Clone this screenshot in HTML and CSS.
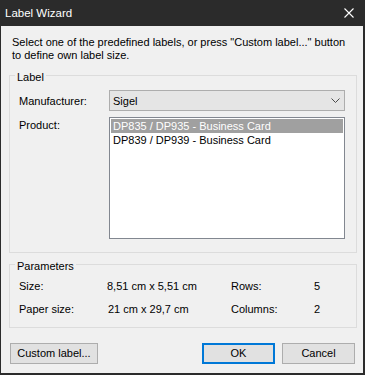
FILE: index.html
```html
<!DOCTYPE html>
<html lang="en">
<head>
<meta charset="utf-8">
<title>Label Wizard</title>
<link rel="stylesheet" href="styles.css">
</head>
<body>
<div class="window">
  <div class="titlebar">
    <span class="title">Label Wizard</span>
    <svg class="close" width="10" height="10" viewBox="0 0 10 10" aria-hidden="true">
      <path d="M0.5 0.5 L9.5 9.5 M9.5 0.5 L0.5 9.5" stroke="#ffffff" stroke-width="1.1" fill="none"/>
    </svg>
  </div>
  <div class="dialog">
    <p class="intro">Select one of the predefined labels, or press "Custom label..." button<br>to define own label size.</p>

    <fieldset class="group group-label">
      <legend>Label</legend>
      <div class="form-grid">
        <span class="field-label">Manufacturer:</span>
        <div class="combo">
          <span class="combo-value">Sigel</span>
          <svg class="chevron" width="9" height="5" viewBox="0 0 9 5" aria-hidden="true">
            <path d="M0.5 0.5 L4.5 4.5 L8.5 0.5" stroke="#4a4a4a" stroke-width="1" fill="none"/>
          </svg>
        </div>
        <span class="field-label product-label">Product:</span>
        <div class="listbox">
          <div class="item selected">DP835 / DP935 - Business Card</div>
          <div class="item">DP839 / DP939 - Business Card</div>
        </div>
      </div>
    </fieldset>

    <fieldset class="group group-params">
      <legend>Parameters</legend>
      <div class="params-grid">
        <span>Size:</span><span>8,51 cm x 5,51 cm</span><span>Rows:</span><span>5</span>
        <span>Paper size:</span><span class="shift">21 cm x 29,7 cm</span><span>Columns:</span><span>2</span>
      </div>
    </fieldset>

    <div class="buttons">
      <button class="btn btn-custom">Custom label...</button>
      <div class="btn-pair">
        <button class="btn btn-ok">OK</button>
        <button class="btn">Cancel</button>
      </div>
    </div>
  </div>
</div>
</body>
</html>
```

FILE: styles.css
```css
* {
  box-sizing: border-box;
}

html, body {
  margin: 0;
  padding: 0;
  background: #2b2b2b;
}

body {
  font-family: "Liberation Sans", Arial, sans-serif;
  font-size: 11px;
  color: #000000;
}

.window {
  width: 365px;
  height: 375px;
  display: flex;
  flex-direction: column;
  background: #2b2b2b;
}

.titlebar {
  height: 26px;
  flex: none;
  display: flex;
  align-items: center;
  justify-content: space-between;
  padding: 0 11px 0 5px;
  color: #ffffff;
  line-height: 26px;
}

.title {
  font-size: 11.5px;
}

.close {
  display: block;
}

.dialog {
  margin: 0 2px 2px 1px;
  height: 347px;
  background: #f0f0f0;
  display: flex;
  flex-direction: column;
}

.intro {
  margin: 10px 0 0 0;
  padding-left: 11px;
  line-height: 13px;
  white-space: nowrap;
}

.group {
  margin: 0 6px 0 8px;
  padding: 0;
  border: 1px solid #dcdcdc;
  min-width: 0;
}

.group-label {
  margin-top: 4px;
}

.group-params {
  margin-top: 2px;
}

.group legend {
  margin-left: 5px;
  padding: 4px 2px 0 2px;
  line-height: 14px;
}

.form-grid {
  display: grid;
  grid-template-columns: 90px 236px;
  grid-template-rows: 21px 122px;
  row-gap: 6px;
  padding: 6px 0 13px 9px;
}

.field-label {
  align-self: center;
}

.product-label {
  align-self: start;
  padding-top: 2px;
}

.combo {
  display: flex;
  align-items: center;
  justify-content: space-between;
  background: #e5e5e5;
  border: 1px solid #adadad;
  padding: 0 4px 0 3px;
}

.chevron {
  display: block;
}

.listbox {
  background: #ffffff;
  border: 1px solid #828790;
  padding: 1px;
}

.item {
  line-height: 14px;
  padding-left: 2px;
  white-space: nowrap;
}

.item.selected {
  background: #a0a0a0;
  color: #ffffff;
}

.params-grid {
  display: grid;
  grid-template-columns: 88px 124px 83px 1fr;
  grid-auto-rows: 15px;
  row-gap: 8px;
  line-height: 15px;
  padding: 6px 0 10px 9px;
}

.shift {
  padding-left: 1px;
}

.buttons {
  margin-top: 15px;
  padding: 0 8px 0 9px;
  display: flex;
  justify-content: space-between;
  align-items: center;
}

.btn-pair {
  display: flex;
  gap: 7px;
}

.btn {
  font-family: inherit;
  font-size: 11px;
  color: #000000;
  height: 21px;
  width: 73px;
  padding: 0;
  margin: 0;
  background: #e1e1e1;
  border: 1px solid #adadad;
  border-radius: 0;
  line-height: 19px;
}

.btn-custom {
  width: 88px;
}

.btn-ok {
  border: 2px solid #0078d7;
  line-height: 17px;
}
```
